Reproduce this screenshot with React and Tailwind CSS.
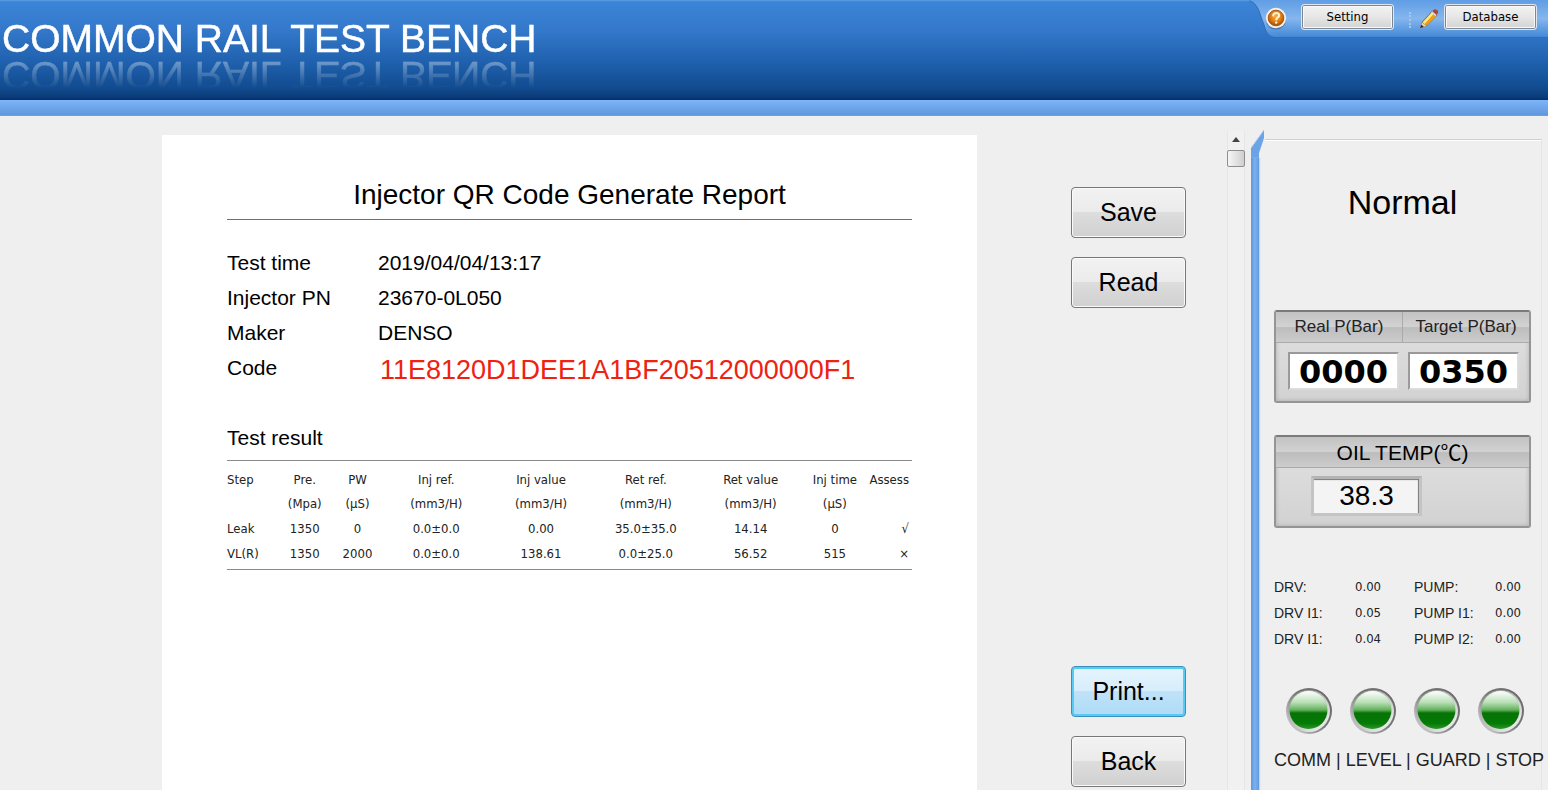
import { useId, useState } from "react";
import clsx from "clsx";

/* ======================
   DATA
====================== */

const REPORT_INFO = [
  { label: "Test time", value: "2019/04/04/13:17" },
  { label: "Injector PN", value: "23670-0L050" },
  { label: "Maker", value: "DENSO" },
  { label: "Code", value: "11E8120D1DEE1A1BF20512000000F1", highlight: true },
];

const COLUMNS = [
  { title: "Step", unit: "", className: "w-[7.5%] text-left" },
  { title: "Pre.", unit: "(Mpa)", className: "w-[7.7%] text-center" },
  { title: "PW", unit: "(μS)", className: "w-[7.7%] text-center" },
  { title: "Inj ref.", unit: "(mm3/H)", className: "w-[15.3%] text-center" },
  { title: "Inj value", unit: "(mm3/H)", className: "w-[15.3%] text-center" },
  { title: "Ret ref.", unit: "(mm3/H)", className: "w-[15.3%] text-center" },
  { title: "Ret value", unit: "(mm3/H)", className: "w-[15.3%] text-center" },
  { title: "Inj time", unit: "(μS)", className: "w-[9.3%] text-center" },
  { title: "Assess", unit: "", className: "w-[6.6%] pr-[3px] text-right" },
];

const RESULTS = [
  ["Leak", "1350", "0", "0.0±0.0", "0.00", "35.0±35.0", "14.14", "0", "√"],
  ["VL(R)", "1350", "2000", "0.0±0.0", "138.61", "0.0±25.0", "56.52", "515", "×"],
];

const READINGS = [
  ["DRV:", "0.00", "PUMP:", "0.00"],
  ["DRV I1:", "0.05", "PUMP I1:", "0.00"],
  ["DRV I1:", "0.04", "PUMP I2:", "0.00"],
];

const LEDS = ["COMM", "LEVEL", "GUARD", "STOP"];

/* ======================
   ICONS
====================== */

function HelpIcon() {
  return (
    <svg viewBox="0 0 22 24" className="mt-[6px] h-6 w-[22px]" aria-hidden="true">
      <defs>
        <radialGradient id="help-fill" cx="50%" cy="40%" r="60%">
          <stop offset="0" stopColor="#f9b04a" />
          <stop offset="0.6" stopColor="#e07a12" />
          <stop offset="1" stopColor="#9a4a08" />
        </radialGradient>
      </defs>
      <ellipse cx="11" cy="14" rx="10" ry="9.6" fill="#3a5f94" opacity="0.6" />
      <circle cx="11" cy="12" r="10.2" fill="#f3eee8" />
      <circle cx="11" cy="12" r="7.8" fill="url(#help-fill)" stroke="#a85a18" />
      <path
        d="M8.2 9.6c.2-1.8 1.4-2.7 3-2.7 1.8 0 3 1 3 2.5 0 2-2.7 2.2-2.9 4.2"
        fill="none"
        stroke="#fff3d8"
        strokeWidth="2"
        strokeLinecap="round"
      />
      <circle cx="11.2" cy="16.6" r="1.2" fill="#fff3d8" />
    </svg>
  );
}

function PencilIcon() {
  return (
    <svg viewBox="0 0 22 22" className="mt-2 h-[22px] w-[21px]" aria-hidden="true">
      <path d="M1.2 20.6 3 14.2 13.6 2.6l5.6 4.6L8.4 18.2z" fill="#7b5a24" />
      <path d="M3.6 14.4 13.4 3.8l2.4 1.9L6 16.4z" fill="#ffe680" />
      <path d="M6 16.4 15.8 5.7l2.6 2.1L8.2 17.8z" fill="#f0a010" />
      <path d="M1.2 20.6l2-6 4.6 3.4z" fill="#ecd3ac" />
      <path d="M1.2 20.6l1.1-3.6 2.8 2z" fill="#2b2523" />
      <path d="M13.2 3.4 15.4 1.2c1-.8 2-.7 3.2.2 1.4 1.1 1.9 2.4 1.1 3.5L18 7.4z" fill="#a8473c" />
      <path d="M12.6 4.2 13.8 2.9l4.7 3.9-1.2 1.3z" fill="#d8d8de" />
    </svg>
  );
}

function Led() {
  const id = useId();

  return (
    <svg viewBox="0 0 48 48" className="h-12 w-12" aria-hidden="true">
      <defs>
        <linearGradient id={`${id}-ring`} x1="0.9" y1="0.1" x2="0.1" y2="0.8">
          <stop offset="0" stopColor="#6a6a6a" />
          <stop offset="0.5" stopColor="#777" />
          <stop offset="1" stopColor="#c4c4c4" />
        </linearGradient>
        <linearGradient id={`${id}-rim`} x1="0" y1="0" x2="1" y2="1">
          <stop offset="0" stopColor="#8c8c8c" />
          <stop offset="1" stopColor="#fafafa" />
        </linearGradient>
        <linearGradient id={`${id}-lens`} x1="0" y1="0" x2="0" y2="1">
          <stop offset="0" stopColor="#ffffff" />
          <stop offset="0.3" stopColor="#b9e0b6" />
          <stop offset="0.5" stopColor="#62b05c" />
          <stop offset="0.58" stopColor="#067306" />
          <stop offset="0.85" stopColor="#047a04" />
          <stop offset="1" stopColor="#2b982a" />
        </linearGradient>
      </defs>
      <circle cx="24" cy="24" r="23" fill={`url(#${id}-ring)`} />
      <circle cx="24" cy="24" r="21" fill={`url(#${id}-rim)`} />
      <circle cx="23.5" cy="23" r="19" fill={`url(#${id}-lens)`} />
    </svg>
  );
}

/* ======================
   BUTTONS
====================== */

function ToolButton({ children }) {
  return (
    <button
      type="button"
      className="mt-1 h-[26px] w-[93px] rounded-[3px] border border-[#dfe6ee] bg-linear-to-b from-[#f4f4f4] via-[#e6e6e6] to-[#d2d2d2] font-['DejaVu_Sans_Condensed','DejaVu_Sans',sans-serif] text-[13px] text-black shadow-[inset_0_0_0_1px_#7c8794,inset_0_0_0_2px_#f8f8f8]"
    >
      {children}
    </button>
  );
}

function ActionButton({ children, active, onClick }) {
  return (
    <button
      type="button"
      onClick={onClick}
      className={clsx(
        "h-[51px] w-[115px] rounded-[4px] border text-[25px] text-black",
        active
          ? "border-[#3c8fb8] bg-[linear-gradient(#e6f5fd_0%,#d6edfb_48%,#bfe2f9_50%,#aedbf6_100%)] shadow-[inset_0_0_0_2px_#55cbf5]"
          : "border-[#777] bg-[linear-gradient(#f2f2f2_0%,#ebebeb_48%,#dddddd_50%,#d0d0d0_100%)] shadow-[inset_0_0_0_1px_#fafafa]"
      )}
    >
      {children}
    </button>
  );
}

/* ======================
   HEADER
====================== */

function Header() {
  return (
    <header>
      <div className="flex h-[100px] items-start justify-between bg-[linear-gradient(#5aa0e4_0%,#3b84d6_2%,#3478cb_30%,#1f61ae_62%,#124b8f_88%,#0a3c7a_97%,#052f66_100%)]">
        <h1 className="mt-[17px] pl-[2px] text-[39px] leading-[44px] whitespace-nowrap text-white [-webkit-box-reflect:below_-8px_linear-gradient(transparent_20%,rgba(255,255,255,0.38)_85%)] [-webkit-text-stroke:0.5px_white]">
          COMMON RAIL TEST BENCH
        </h1>

        <nav className="flex h-[38px] items-start">
          <svg viewBox="0 0 32 38" className="h-[38px] w-8" aria-hidden="true">
            <defs>
              <linearGradient id="tab-fill" x1="0" y1="0" x2="0" y2="1">
                <stop offset="0" stopColor="#5f9de4" />
                <stop offset="0.5" stopColor="#85b6ee" />
                <stop offset="1" stopColor="#4488d6" />
              </linearGradient>
            </defs>
            <path d="M2 0C9 0 13 3 16 11l5 14c2 8 5 12 11 12.5V0z" fill="url(#tab-fill)" />
            <path
              d="M6 .8C10 2 13 4 16 11l5 14c2 8 5 12 11 12.5"
              fill="none"
              stroke="#2c6dbd"
            />
          </svg>
          <div className="flex h-[38px] items-start border-b border-[#2c6dbd] bg-[linear-gradient(#5f9de4_0%,#85b6ee_50%,#4488d6_100%)] pr-[11px]">
            <span className="relative -ml-[10px]">
              <HelpIcon />
            </span>
            <div className="ml-[14px] flex">
              <ToolButton>Setting</ToolButton>
            </div>
            <span className="mt-3 ml-[15px] h-4 border-l-2 border-dotted border-[#a3c6ef]" />
            <span className="mr-1 ml-2">
              <PencilIcon />
            </span>
            <ToolButton>Database</ToolButton>
          </div>
        </nav>
      </div>
      <div className="h-4 border-b border-[#6c9fdd] bg-linear-to-b from-[#7fb4f8] to-[#5f97de]" />
    </header>
  );
}

/* ======================
   REPORT
====================== */

function Report() {
  return (
    <article className="mt-[19px] min-w-0 flex-1 bg-white px-[65px] pt-11 text-black">
      <h2 className="border-b border-[#6e6e6e] pb-2 text-center text-[28px] leading-8 whitespace-nowrap">
        Injector QR Code Generate Report
      </h2>

      <dl className="mt-[25px] text-[21px] leading-[35px]">
        {REPORT_INFO.map((item) => (
          <div key={item.label} className="flex h-[35px]">
            <dt className="w-[151px]">{item.label}</dt>
            <dd className={clsx(item.highlight && "pt-[3px] pl-[2px] text-[27px] text-[#ee2211]")}>
              {item.value}
            </dd>
          </div>
        ))}
      </dl>

      <h3 className="mt-[35px] text-[21px] leading-[35px]">Test result</h3>

      <div className="mt-[5px] border-y border-[#8a8a8a] pt-[7px] pb-[3px]">
        <table className="w-full table-fixed font-['DejaVu_Sans_Condensed','DejaVu_Sans',sans-serif] text-[13px] whitespace-nowrap text-[#222]">
          <thead>
            <tr className="h-6">
              {COLUMNS.map((c) => (
                <th key={c.title} className={clsx("p-0 font-normal", c.className)}>
                  {c.title}
                </th>
              ))}
            </tr>
            <tr className="h-6">
              {COLUMNS.map((c) => (
                <td key={c.title} className={clsx("p-0", c.className)}>
                  {c.unit}
                </td>
              ))}
            </tr>
          </thead>
          <tbody>
            {RESULTS.map((row) => (
              <tr key={row[0]} className="h-[25px]">
                {row.map((cell, i) => (
                  <td key={COLUMNS[i].title} className={clsx("p-0", COLUMNS[i].className)}>
                    {cell}
                  </td>
                ))}
              </tr>
            ))}
          </tbody>
        </table>
      </div>
    </article>
  );
}

function ScrollTrack() {
  return (
    <div className="mt-[15px] mr-[6px] ml-[41px] flex w-[18px] flex-col items-center border-x border-[#e6e6e6] bg-[#f1f1f1]">
      <svg viewBox="0 0 8 5" className="mt-[6px] h-[5px] w-2" aria-hidden="true">
        <path d="M0 5 4 0l4 5z" fill="#444" />
      </svg>
      <div className="mt-2 h-[17px] w-[18px] rounded-[2px] border border-[#8e8e8e] bg-linear-to-r from-[#f6f6f6] to-[#cfcfcf]" />
    </div>
  );
}

/* ======================
   STATUS PANEL
====================== */

function Gauge({ titles, children }) {
  return (
    <div className="h-[93px] rounded-[3px] border-2 border-[#959595] border-t-[#7a7a7a] bg-linear-to-b from-[#e2e2e2] to-[#d2d2d2] shadow-[inset_0_0_4px_#aaa]">
      <div className="flex h-[31px] divide-x divide-[#aaa] border-b border-[#aaa] bg-[linear-gradient(#c2c2c2_0%,#d2d2d2_48%,#bdbdbd_52%,#cccccc_100%)]">
        {titles.map((t) => (
          <div
            key={t}
            className={clsx(
              "flex-1 text-center whitespace-nowrap text-[#222]",
              titles.length > 1 ? "text-[17px] leading-[29px]" : "text-[21px] leading-[31px] text-black"
            )}
          >
            {t}
          </div>
        ))}
      </div>
      {children}
    </div>
  );
}

function Digits({ value }) {
  return (
    <output className="h-[38px] w-[111px] border-2 border-[#dcdcdc] border-t-[#9a9a9a] border-l-[#9a9a9a] bg-white text-center font-['DejaVu_Sans',sans-serif] text-[32px] leading-[36px] font-bold text-black">
      {value}
    </output>
  );
}

function StatusPanel() {
  return (
    <aside className="mt-[14px] flex w-[297px]">
      <div className="flex w-[14px] flex-col">
        <svg viewBox="0 0 14 28" className="h-7 w-[14px]" aria-hidden="true">
          <path d="M0 18 13 0v8L8 23v5H0z" fill="#6ba3e6" />
          <path d="M0 18 13 0" fill="none" stroke="#a9cdf5" />
        </svg>
        <div className="w-2 flex-1 bg-[linear-gradient(90deg,#5c97de,#7db1f0_50%,#5f9ae0)] shadow-[1px_0_1px_#bcd6f5]" />
      </div>

      <div className="mt-[9px] mr-[6px] min-w-0 flex-1 border-t border-r border-t-[#cfcfcf] border-r-[#e2e6ec] pr-[10px] pl-[9px] shadow-[inset_0_1px_0_#fff]">
        <p className="mt-10 text-center text-[34px] leading-[44px] text-black">Normal</p>

        <div className="mt-[86px]">
          <Gauge titles={["Real P(Bar)", "Target P(Bar)"]}>
            <div className="mt-[9px] flex justify-between pr-[10px] pl-3">
              <Digits value="0000" />
              <Digits value="0350" />
            </div>
          </Gauge>
        </div>

        <div className="mt-8">
          <Gauge titles={["OIL TEMP(℃)"]}>
            <output className="mt-2 ml-[35px] block h-10 w-[111px] border-3 border-[#c4c4c4] border-t-[#b4b4b4] bg-[#f4f4f4] text-center text-[28px] leading-[34px] text-black shadow-[inset_-1px_1px_1px_#777]">
              38.3
            </output>
          </Gauge>
        </div>

        <dl className="mt-[46px] grid grid-cols-[81px_59px_81px_1fr] text-[14px] leading-[26px] whitespace-nowrap text-[#222]">
          {READINGS.flat().map((text, i) =>
            i % 2 === 0 ? (
              <dt key={i}>{text}</dt>
            ) : (
              <dd
                key={i}
                className="font-['DejaVu_Sans_Condensed','DejaVu_Sans',sans-serif] text-[13px]"
              >
                {text}
              </dd>
            )
          )}
        </dl>

        <div className="mt-[35px] flex gap-4 pl-[11px]">
          {LEDS.map((name) => (
            <Led key={name} />
          ))}
        </div>
        <p className="mt-3 text-[18px] leading-[26px] whitespace-nowrap text-[#222]">
          {LEDS.join(" | ")}
        </p>
      </div>
    </aside>
  );
}

export default function App() {
  const [selected, setSelected] = useState("Print...");

  const renderButton = (name) => (
    <ActionButton active={selected === name} onClick={() => setSelected(name)}>
      {name}
    </ActionButton>
  );

  return (
    <div className="flex min-h-screen flex-col bg-[#efefef] font-['Liberation_Sans','Noto_Sans_CJK_SC',sans-serif]">
      <Header />

      <main className="flex flex-1 pl-[162px]">
        <Report />

        <div className="ml-[94px] flex flex-col justify-between pt-[71px] pb-[3px]">
          <div className="flex flex-col gap-[19px]">
            {renderButton("Save")}
            {renderButton("Read")}
          </div>
          <div className="flex flex-col gap-[19px]">
            {renderButton("Print...")}
            {renderButton("Back")}
          </div>
        </div>

        <ScrollTrack />
        <StatusPanel />
      </main>
    </div>
  );
}
